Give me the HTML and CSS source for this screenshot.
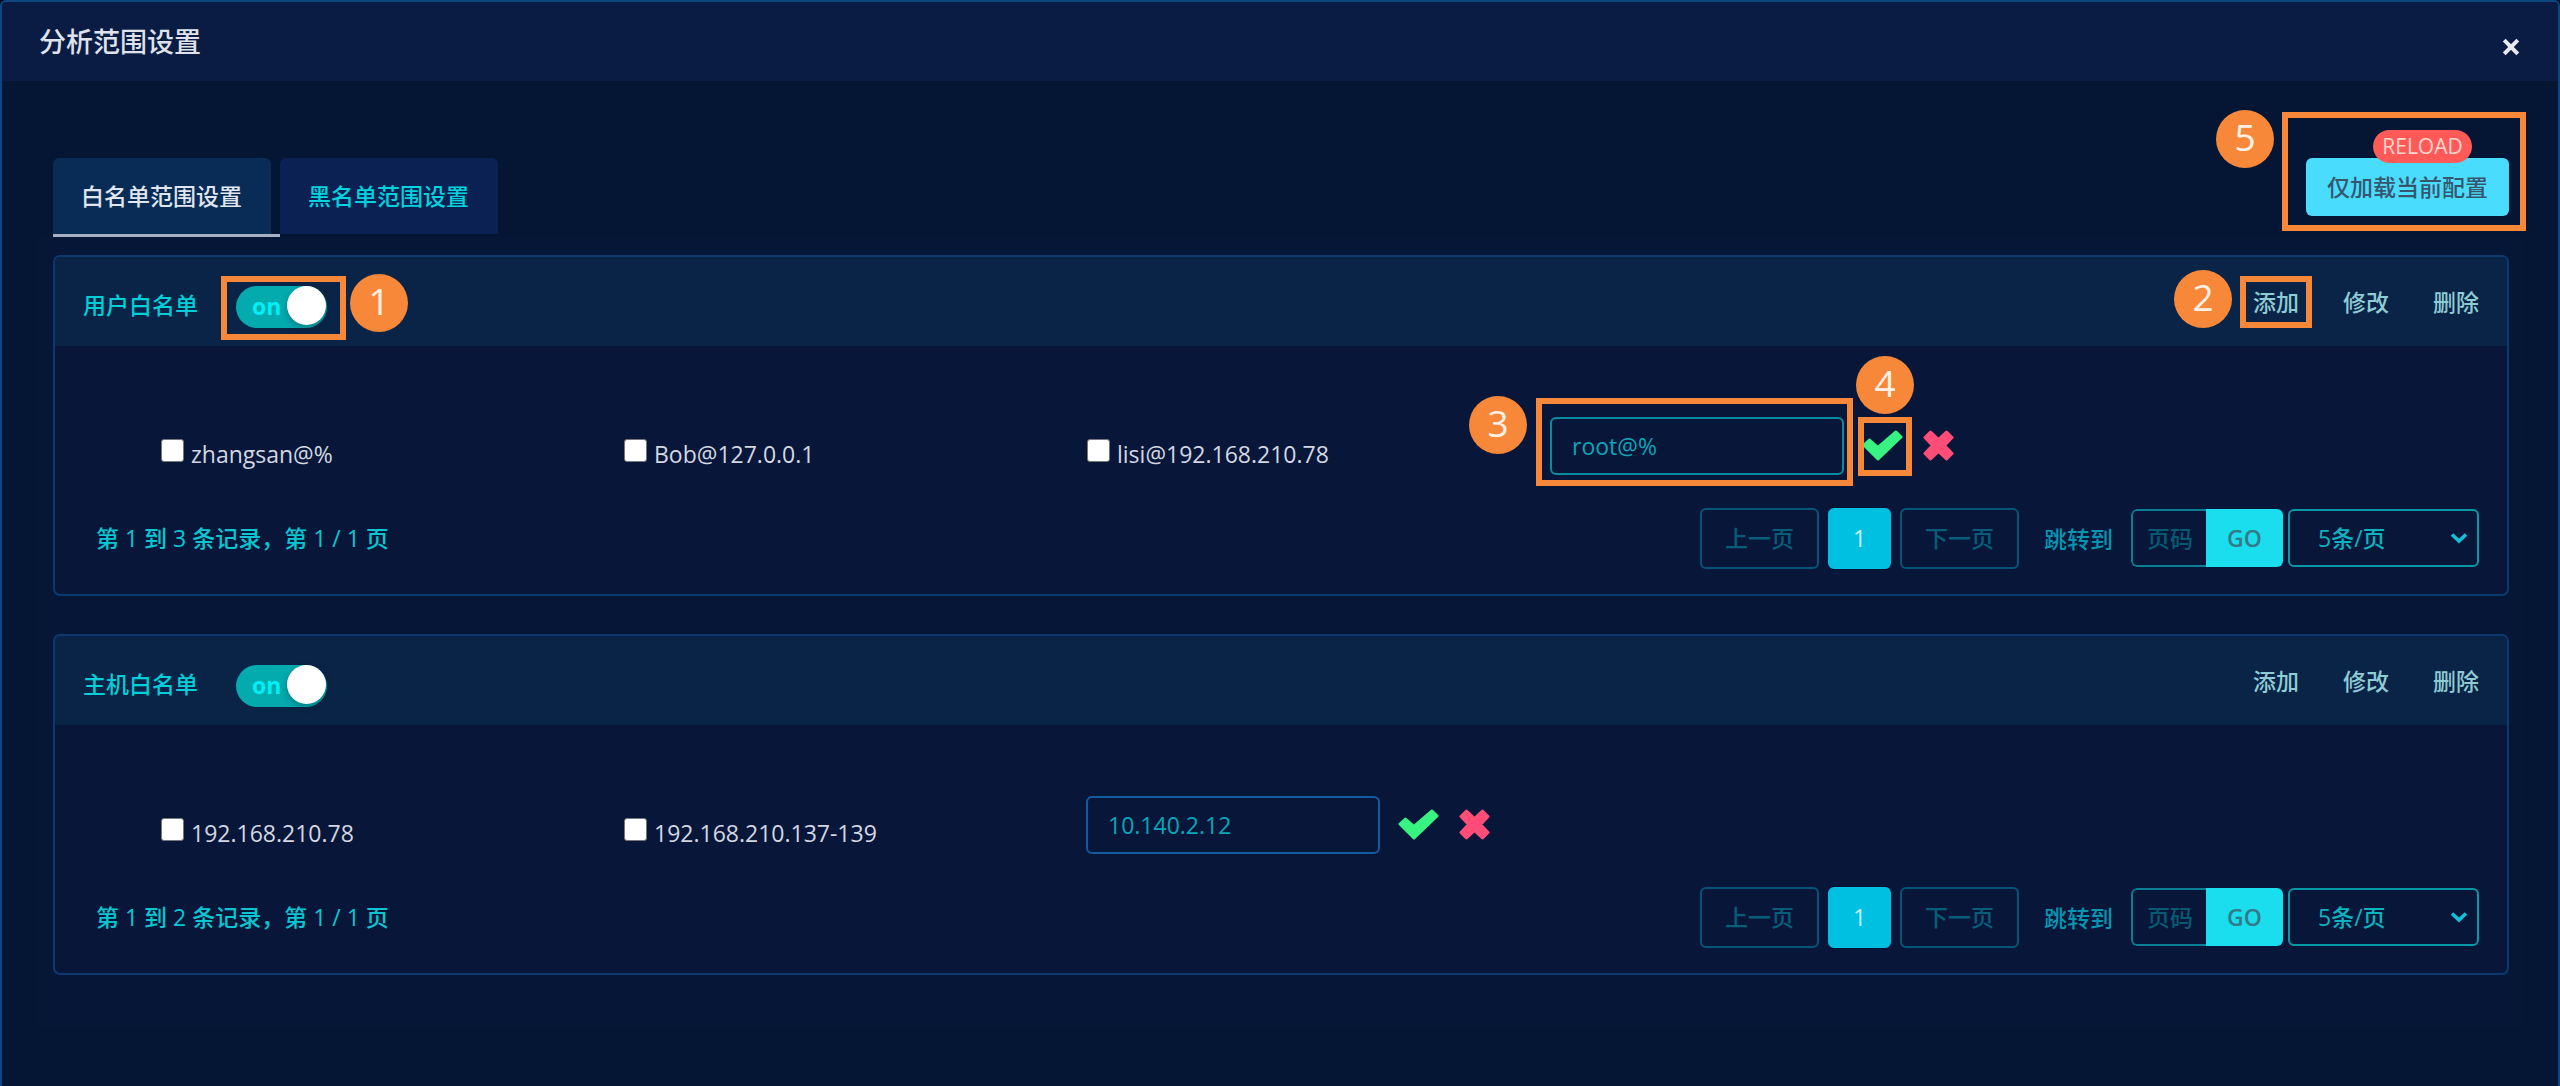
FILE: index.html
```html
<!DOCTYPE html>
<html lang="zh-CN">
<head>
<meta charset="utf-8">
<title>分析范围设置</title>
<link rel="stylesheet" href="styles.css">
</head>
<body>
<svg class="sprite" aria-hidden="true">
  <symbol id="check" viewBox="0 0 41 31"><path d="M2 15 L7.5 10 L16 17.5 L34 2 L39 7 L16 29 Z" fill="#38f281" stroke="#38f281" stroke-width="3" stroke-linejoin="round"/></symbol>
  <symbol id="cross" viewBox="0 0 31 31"><path d="M2 7.5 L7.5 2 L15.5 9.5 L23.5 2 L29 7.5 L21.5 15.5 L29 23.5 L23.5 29 L15.5 21.5 L7.5 29 L2 23.5 L9.5 15.5 Z" fill="#ff4d78" stroke="#ff4d78" stroke-width="3" stroke-linejoin="round"/></symbol>
</svg>
<div class="modal">
  <header class="modal-head">
    <h1>分析范围设置</h1>
    <svg class="close" viewBox="0 0 18 18"><path d="M2.2 2.2 L15.8 15.8 M15.8 2.2 L2.2 15.8"/></svg>
  </header>
  <main class="modal-body">
    <div class="top-row">
      <nav class="tabs">
        <div class="tab-wrap active"><a class="tab">白名单范围设置</a></div>
        <div class="tab-wrap"><a class="tab">黑名单范围设置</a></div>
      </nav>
      <div class="reload"><button class="reload-btn">仅加载当前配置</button><span class="reload-tag">RELOAD</span></div>
    </div>

    <div class="panels">
      <section class="panel">
        <div class="panel-head">
          <h2>用户白名单</h2>
          <div class="toggle"><span>on</span><i></i></div>
          <div class="links"><a>添加</a><a>修改</a><a>删除</a></div>
        </div>
        <div class="items">
          <label class="item"><i class="box"></i><span>zhangsan@%</span></label>
          <label class="item"><i class="box"></i><span>Bob@127.0.0.1</span></label>
          <label class="item"><i class="box"></i><span>lisi@192.168.210.78</span></label>
          <div class="edit focus"><div class="field">root@%</div><svg class="check"><use href="#check"/></svg><svg class="cross"><use href="#cross"/></svg></div>
        </div>
        <div class="foot">
          <span class="records">第 1 到 3 条记录，第 1 / 1 页</span>
          <div class="pager"><span class="page">上一页</span><span class="page current">1</span><span class="page">下一页</span></div>
          <span class="jump">跳转到</span>
          <div class="go-group"><span class="num">页码</span><span class="go">GO</span></div>
          <div class="select"><span>5条/页</span><svg viewBox="0 0 18 12"><path d="M2 2.5 L9 9 L16 2.5"/></svg></div>
        </div>
      </section>

      <section class="panel">
        <div class="panel-head">
          <h2>主机白名单</h2>
          <div class="toggle"><span>on</span><i></i></div>
          <div class="links"><a>添加</a><a>修改</a><a>删除</a></div>
        </div>
        <div class="items">
          <label class="item"><i class="box"></i><span>192.168.210.78</span></label>
          <label class="item"><i class="box"></i><span>192.168.210.137-139</span></label>
          <div class="edit"><div class="field">10.140.2.12</div><svg class="check"><use href="#check"/></svg><svg class="cross"><use href="#cross"/></svg></div>
        </div>
        <div class="foot">
          <span class="records">第 1 到 2 条记录，第 1 / 1 页</span>
          <div class="pager"><span class="page">上一页</span><span class="page current">1</span><span class="page">下一页</span></div>
          <span class="jump">跳转到</span>
          <div class="go-group"><span class="num">页码</span><span class="go">GO</span></div>
          <div class="select"><span>5条/页</span><svg viewBox="0 0 18 12"><path d="M2 2.5 L9 9 L16 2.5"/></svg></div>
        </div>
      </section>
    </div>
  </main>
</div>

<div class="mark mark-1"></div><div class="dot dot-1">1</div>
<div class="mark mark-2"></div><div class="dot dot-2">2</div>
<div class="mark mark-3"></div><div class="dot dot-3">3</div>
<div class="mark mark-4"></div><div class="dot dot-4">4</div>
<div class="mark mark-5"></div><div class="dot dot-5">5</div>
</body>
</html>
```
FILE: styles.css
```css
* { box-sizing: border-box; }
body {
  margin: 0;
  width: 2560px;
  height: 1086px;
  overflow: hidden;
  position: relative;
  background: #03102a;
  font-family: "Open Sans", "Noto Sans CJK SC", sans-serif;
  font-size: 23px;
  font-weight: 500;
  line-height: 24px;
}
h1, h2 { margin: 0; font-weight: 500; }
.sprite { display: none; }

.modal {
  height: 1086px;
  border: 2px solid #0d4683;
  border-bottom: 0;
  border-radius: 6px 6px 0 0;
  background: #041633;
  overflow: hidden;
}
.modal-head {
  height: 79px;
  padding: 0 38px 0 37px;
  display: flex;
  justify-content: space-between;
  background: #0a1c44;
}
.modal-head h1 { margin-top: 24px; font-size: 27px; line-height: 32px; color: #dfe2ea; }
.close { width: 18px; height: 18px; margin-top: 36px; fill: none; stroke: #e6e9f0; stroke-width: 4; }

.modal-body { padding: 77px 34px 0 35px; }
.top-row { display: flex; justify-content: space-between; height: 79px; padding: 0 15px 0 16px; }
.tabs { display: flex; }
.tab-wrap { width: 227px; height: 79px; border-bottom: 3px solid transparent; }
.tab-wrap.active { border-color: #a5b0c6; }
.tab {
  display: flex;
  align-items: center;
  justify-content: center;
  width: 218px;
  height: 76px;
  padding-right: 1px;
  border-radius: 6px 6px 0 0;
  background: #0c2153;
  color: #00d3dd;
}
.active .tab { background: #082c56; color: #e0e6ee; }
.reload { position: relative; height: 58px; }
.reload-btn {
  width: 203px;
  height: 58px;
  padding: 0;
  border: 0;
  border-radius: 6px;
  background: #4adcfd;
  color: #37566e;
  font: inherit;
}
.reload-tag {
  position: absolute;
  left: 67px;
  top: -28px;
  width: 99px;
  height: 33px;
  border-radius: 17px;
  background: #ff5a57;
  color: #ffd5d0;
  font-size: 21px;
  font-weight: 400;
  line-height: 33px;
  text-align: center;
}

.panels {
  display: flex;
  flex-direction: column;
  gap: 38px;
  height: 792px;
  padding: 18px 15px 0 16px;
  background: #051637;
}
.panel { height: 341px; border: 2px solid #0c3a6f; border-radius: 7px; background: #081739; }
.panel-head {
  display: flex;
  align-items: center;
  height: 89px;
  padding: 0 28px;
  background: #0a2447;
  border-radius: 5px 5px 0 0;
}
.panel-head h2 { width: 154px; padding-top: 6px; font-size: 23px; color: #00cfd9; }
.toggle {
  display: flex;
  align-items: center;
  justify-content: space-between;
  width: 91px;
  height: 42px;
  margin-top: 10px;
  margin-left: -1px;
  padding: 0 1px 2px 16px;
  border-radius: 21px;
  background: #03abaf;
  color: #00f0f5;
  font-weight: 700;
}
.toggle i { width: 39px; height: 39px; border-radius: 50%; background: #fff; box-shadow: 0 3px 6px rgba(0,40,60,.35); }
.links { display: flex; gap: 44px; margin-left: auto; color: #8ecbd5; }

.items { display: grid; grid-template-columns: repeat(4, 463px); padding: 71px 0 0 106px; height: 161px; }
.item { display: flex; color: #d3d7e1; }
.box { width: 23px; height: 23px; margin: 22px 7px 0 0; border-radius: 3px; background: #fff; border: 1px solid #777; }
.item span { margin-top: 25px; }
.edit { display: flex; align-items: flex-start; white-space: nowrap; margin-left: -1px; }
.field {
  width: 294px;
  height: 58px;
  padding: 0 20px;
  border: 2px solid #125b9f;
  border-radius: 6px;
  color: #0ba5b9;
  line-height: 54px;
}
.focus .field { border-color: #078ba0; }
.focus { padding-left: 1px; }
.check { width: 41px; height: 31px; margin: 13px 0 0 18px; }
.cross { width: 31px; height: 31px; margin: 13px 0 0 20px; }

.foot { display: flex; align-items: center; height: 62px; padding: 0 28px 0 41px; }
.records { margin-top: -1px; color: #08c7d3; }
.pager { display: flex; gap: 9px; margin-left: auto; }
.page {
  width: 119px;
  height: 61px;
  border: 2px solid #075576;
  border-radius: 6px;
  color: #085d79;
  line-height: 57px;
  text-align: center;
}
.page.current { width: 63px; background: #00c0e1; border-color: #00c0e1; color: #cdeff7; }
.jump { margin: 2px 18px 0 25px; color: #0795b2; }
.go-group { display: flex; width: 152px; height: 58px; margin: 0 5px 0 0; border-radius: 6px; overflow: hidden; }
.num { width: 75px; border: 2px solid #087f92; border-right: 0; border-radius: 6px 0 0 6px; padding-left: 14px; color: #075a72; line-height: 55px; }
.go { flex: 1; background: #1addee; color: #337a88; line-height: 58px; text-align: center; font-weight: 600; }
.select {
  display: flex;
  align-items: center;
  justify-content: space-between;
  width: 191px;
  height: 58px;
  padding: 0 9px 0 28px;
  border: 2px solid #0899a6;
  border-radius: 6px;
  color: #0bb3c0;
}
.select svg { width: 18px; height: 12px; fill: none; stroke: #13c0d8; stroke-width: 3.6; }

/* numbered callouts floating over the dialog */
.mark { position: absolute; border: 6px solid #f78839; }
.dot {
  position: absolute;
  width: 58px;
  height: 58px;
  border-radius: 50%;
  background: #f78839;
  color: #fff1e6;
  font-size: 37px;
  font-weight: 400;
  line-height: 54px;
  text-align: center;
}
.mark-1 { left: 221px; top: 276px; width: 125px; height: 64px; }
.mark-2 { left: 2240px; top: 276px; width: 72px; height: 52px; }
.mark-3 { left: 1536px; top: 398px; width: 317px; height: 88px; }
.mark-4 { left: 1858px; top: 417px; width: 54px; height: 59px; }
.mark-5 { left: 2282px; top: 112px; width: 244px; height: 119px; }
.dot-1 { left: 350px; top: 274px; }
.dot-2 { left: 2174px; top: 270px; }
.dot-3 { left: 1469px; top: 396px; }
.dot-4 { left: 1856px; top: 356px; }
.dot-5 { left: 2216px; top: 110px; }
```
